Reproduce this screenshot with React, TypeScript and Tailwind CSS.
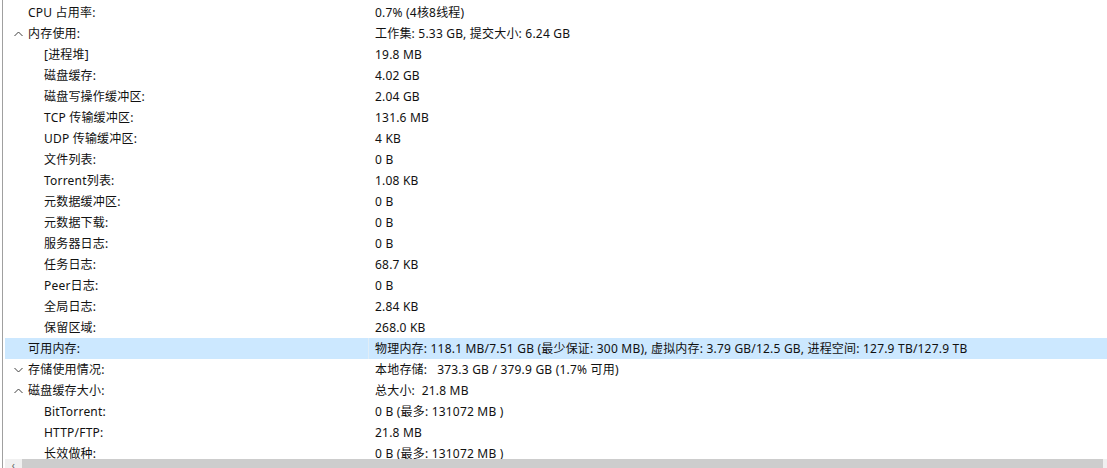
import React from 'react';

interface Row {
  name: string;
  value: string;
  level: number;
  toggle?: 'open' | 'closed';
  selected?: boolean;
}

const rows: Row[] = [
  { name: 'CPU 占用率:', value: '0.7% (4核8线程)', level: 0 },
  { name: '内存使用:', value: '工作集: 5.33 GB, 提交大小: 6.24 GB', level: 0, toggle: 'open' },
  { name: '[进程堆]', value: '19.8 MB', level: 1 },
  { name: '磁盘缓存:', value: '4.02 GB', level: 1 },
  { name: '磁盘写操作缓冲区:', value: '2.04 GB', level: 1 },
  { name: 'TCP 传输缓冲区:', value: '131.6 MB', level: 1 },
  { name: 'UDP 传输缓冲区:', value: '4 KB', level: 1 },
  { name: '文件列表:', value: '0 B', level: 1 },
  { name: 'Torrent列表:', value: '1.08 KB', level: 1 },
  { name: '元数据缓冲区:', value: '0 B', level: 1 },
  { name: '元数据下载:', value: '0 B', level: 1 },
  { name: '服务器日志:', value: '0 B', level: 1 },
  { name: '任务日志:', value: '68.7 KB', level: 1 },
  { name: 'Peer日志:', value: '0 B', level: 1 },
  { name: '全局日志:', value: '2.84 KB', level: 1 },
  { name: '保留区域:', value: '268.0 KB', level: 1 },
  {
    name: '可用内存:',
    value: '物理内存: 118.1 MB/7.51 GB (最少保证: 300 MB), 虚拟内存: 3.79 GB/12.5 GB, 进程空间: 127.9 TB/127.9 TB',
    level: 0,
    selected: true,
  },
  { name: '存储使用情况:', value: '本地存储:   373.3 GB / 379.9 GB (1.7% 可用)', level: 0, toggle: 'closed' },
  { name: '磁盘缓存大小:', value: '总大小:  21.8 MB', level: 0, toggle: 'open' },
  { name: 'BitTorrent:', value: '0 B (最多: 131072 MB )', level: 1 },
  { name: 'HTTP/FTP:', value: '21.8 MB', level: 1 },
  { name: '长效做种:', value: '0 B (最多: 131072 MB )', level: 1 },
];

const Chevron = ({ open }: { open: boolean }) => (
  <svg width="9" height="6" viewBox="0 0 9 6" className="text-[#404040]">
    <path
      d={open ? 'M0.5 5 L4.5 1 L8.5 5' : 'M0.5 1 L4.5 5 L8.5 1'}
      fill="none"
      stroke="currentColor"
      strokeWidth="1"
    />
  </svg>
);

export default function App() {
  return (
    <div className="w-[1107px] h-[468px] bg-white flex overflow-hidden font-['Segoe_UI','Noto_Sans','Noto_Sans_CJK_SC',sans-serif] text-[12px] tracking-[0.2px] text-[#111]">
      <div className="w-[2px]" />
      <div className="w-[1px] bg-[#a0a0a0]" />
      <div className="w-[2px]" />
      <div className="flex-1 flex flex-col min-w-0">
        <div className="flex-1 overflow-hidden pt-[2px]">
          {rows.map((r, i) => (
            <div
              key={i}
              className={`flex h-[21px] items-center whitespace-pre ${r.selected ? 'bg-[#cce8ff]' : ''}`}
            >
              <div className={`w-[363px] flex items-center h-full ${r.level === 1 ? 'pl-[39px]' : 'pl-[23px]'} relative`}>
                {r.toggle && (
                  <span className="absolute left-[9px] top-[8px]">
                    <Chevron open={r.toggle === 'open'} />
                  </span>
                )}
                {r.name}
              </div>
              <div className={`w-[1px] h-full ${r.selected ? 'bg-[#e0edf7]' : ''}`} />
              <div className="pl-[6px]">{r.value}</div>
            </div>
          ))}
        </div>
        <div className="h-[9px] flex shrink-0">
          <div className="w-[17px] bg-[#f0f0f0] flex justify-center pt-[1px] text-[#606060] text-[10px] leading-none">
            ‹
          </div>
          <div className="flex-1 bg-[#cdcdcd]" />
          <div className="w-[4px] bg-[#f0f0f0]" />
        </div>
      </div>
    </div>
  );
}
